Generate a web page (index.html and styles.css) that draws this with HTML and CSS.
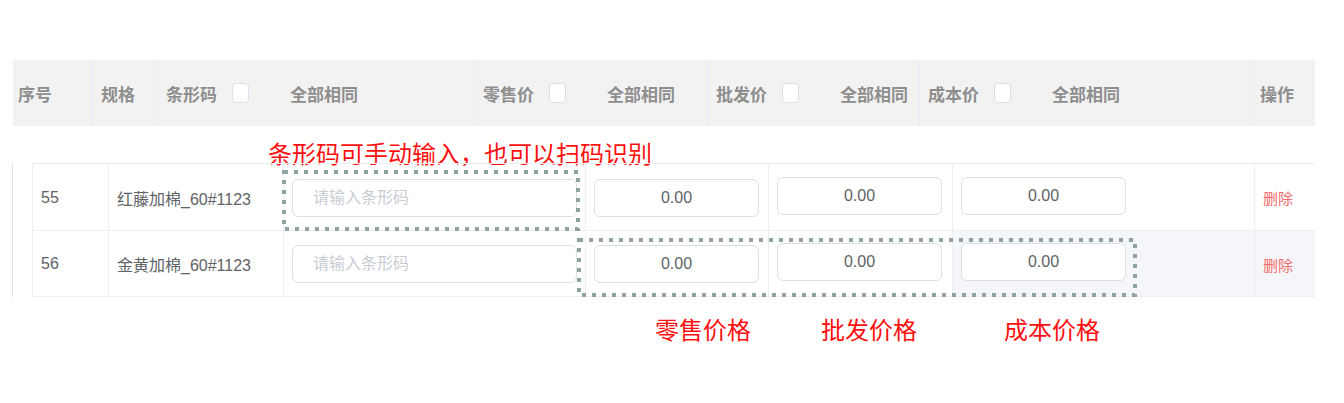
FILE: index.html
```html
<!DOCTYPE html>
<html lang="zh-CN">
<head>
    <meta charset="UTF-8">
    <meta name="viewport" content="width=device-width, initial-scale=1.0">
    <title>规格价格设置</title>
    <link rel="stylesheet" href="styles.css">
</head>
<body>
    <div class="sheet">
        <div class="thead">
            <div class="th th-no">序号</div>
            <div class="th">规格</div>
            <div class="th"><span>条形码</span><span class="check"></span><span class="same">全部相同</span></div>
            <div class="th"><span>零售价</span><span class="check"></span><span class="same">全部相同</span></div>
            <div class="th"><span>批发价</span><span class="check"></span><span class="same">全部相同</span></div>
            <div class="th"><span>成本价</span><span class="check"></span><span class="same">全部相同</span></div>
            <div class="th th-op">操作</div>
        </div>

        <div class="note note-top">条形码可手动输入，也可以扫码识别</div>

        <div class="tbody">
            <div class="row">
                <div class="td">55</div>
                <div class="td">红藤加棉_60#1123</div>
                <div class="td"><input class="ipt ipt-code" type="text" placeholder="请输入条形码"></div>
                <div class="td"><input class="ipt ipt-price" type="text" value="0.00"></div>
                <div class="td td-up"><input class="ipt ipt-price" type="text" value="0.00"></div>
                <div class="td td-up"><input class="ipt ipt-price" type="text" value="0.00"></div>
                <div class="td"><a class="del">删除</a></div>
            </div>
            <div class="row">
                <div class="td">56</div>
                <div class="td">金黄加棉_60#1123</div>
                <div class="td"><input class="ipt ipt-code" type="text" placeholder="请输入条形码"></div>
                <div class="td"><input class="ipt ipt-price" type="text" value="0.00"></div>
                <div class="td td-up"><input class="ipt ipt-price" type="text" value="0.00"></div>
                <div class="td td-up td-hover"><input class="ipt ipt-price" type="text" value="0.00"></div>
                <div class="td td-hover"><a class="del">删除</a></div>
            </div>

            <!-- annotation frames -->
            <svg class="mark mark-code" width="298" height="61">
                <rect x="2" y="2" width="294" height="57" fill="none" stroke="#8fa3a3" stroke-width="4" stroke-dasharray="4 6"/>
            </svg>
            <svg class="mark mark-price" width="560" height="59">
                <rect x="2" y="2" width="556" height="55" fill="none" stroke="#8fa3a3" stroke-width="4" stroke-dasharray="4 6"/>
            </svg>
        </div>

        <div class="note note-bottom">
            <span class="lbl-retail">零售价格</span>
            <span class="lbl-whole">批发价格</span>
            <span class="lbl-cost">成本价格</span>
        </div>
    </div>
</body>
</html>
```

FILE: styles.css
```css
* {
    margin: 0;
    padding: 0;
    box-sizing: border-box;
}

body {
    background-color: #ffffff;
    font-family: 'Liberation Sans', 'Noto Sans CJK SC', sans-serif;
    color: #606266;
    width: 1344px;
    height: 403px;
    overflow: hidden;
}

.sheet {
    padding-top: 60px;
}

/* header */
.thead {
    margin-left: 13px;
    width: 1302px;
    height: 66px;
    display: grid;
    grid-template-columns: 80px 65px 317px 233px 212px 334px 61px;
    background-color: #f2f2f2;
}

.th {
    display: flex;
    align-items: center;
    padding-left: 8px;
    font-family: 'Noto Sans CJK SC', sans-serif;
    font-size: 17px;
    font-weight: 700;
    color: #8e8e8e;
    border-right: 1px solid #e9ebf2;
}

.th-no {
    padding-left: 5px;
}

.th-op {
    padding-left: 6px;
    border-right: none;
}

.check {
    width: 17px;
    height: 20px;
    margin-left: 15px;
    background-color: #ffffff;
    border: 1px solid #dcdfe6;
    border-radius: 4px;
}

.same {
    margin-left: 41px;
}

/* annotations */
.note {
    font-family: 'Noto Sans CJK SC', sans-serif;
    font-size: 24px;
    line-height: 24px;
    color: #ff1010;
}

.note-top {
    height: 37px;
    padding-top: 15px;
    padding-left: 268px;
    white-space: nowrap;
}

.note-bottom {
    display: flex;
    margin-top: 20px;
    padding-left: 655px;
}

.lbl-whole {
    margin-left: 70px;
}

.lbl-cost {
    margin-left: 87px;
}

/* body */
.tbody {
    position: relative;
    margin-left: 12px;
    width: 1303px;
    padding-left: 19px;
    border-left: 1px solid #e2e4ec;
}

.row {
    display: grid;
    grid-template-columns: 76px 175px 302px 183px 184px 302px 61px;
    height: 67px;
    border-top: 1px solid #ebeef5;
}

.row:last-of-type {
    border-bottom: 1px solid #ebeef5;
}

.td {
    display: flex;
    align-items: center;
    padding: 1px 8px 0 8px;
    border-left: 1px solid #ebeef5;
    font-size: 16px;
    font-family: 'Liberation Sans', 'Noto Sans CJK SC', sans-serif;
    color: #606266;
    white-space: nowrap;
}

.td-up {
    padding-top: 0;
    padding-bottom: 3px;
}

.td-hover {
    background-color: #f5f6fa;
}

.ipt {
    height: 38px;
    border: 1px solid #dcdfe6;
    border-radius: 6px;
    background-color: #ffffff;
    outline: none;
    font-family: 'Liberation Sans', 'Noto Sans CJK SC', sans-serif;
    color: #606266;
}

.ipt-code {
    width: 286px;
    padding-left: 20px;
    font-size: 16px;
}

.ipt-code::placeholder {
    color: #c9ccd3;
}

.ipt-price {
    width: 165px;
    font-size: 16px;
    text-align: center;
}

.del {
    color: #f56c6c;
    font-family: 'Noto Sans CJK SC', sans-serif;
    font-size: 15px;
    cursor: pointer;
}

.mark {
    position: absolute;
    pointer-events: none;
}

.mark-code {
    left: 269px;
    top: 7px;
}

.mark-price {
    left: 564px;
    top: 75px;
}
```
